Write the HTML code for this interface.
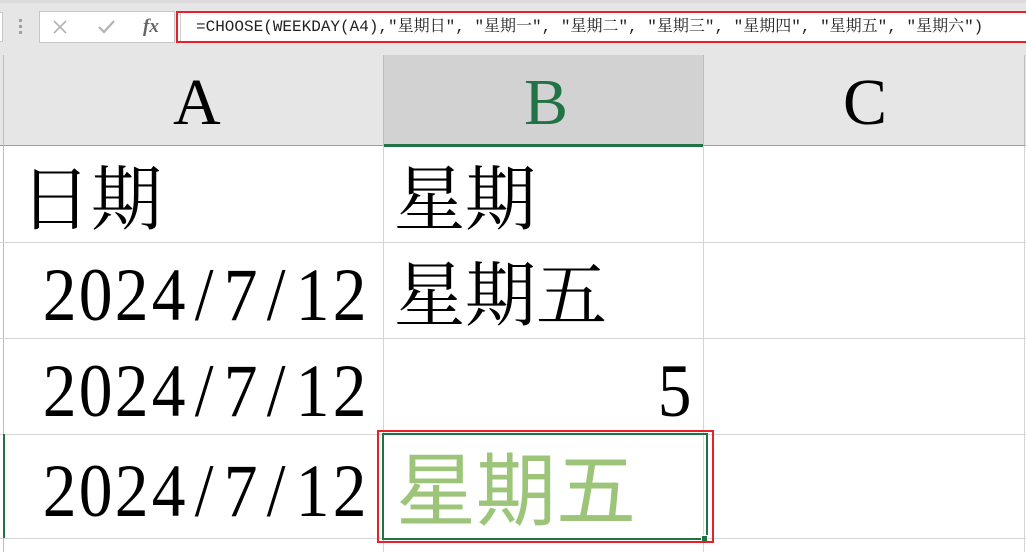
<!DOCTYPE html>
<html><head><meta charset="utf-8"><style>
*{margin:0;padding:0;box-sizing:border-box}
body{width:1026px;height:552px;overflow:hidden;background:#fff;position:relative;font-family:"Liberation Serif","Noto Serif CJK SC",serif}
.a{position:absolute}
.cj{font-family:"Liberation Serif","Noto Serif CJK SC",serif;font-size:71px;line-height:1;color:#000;white-space:nowrap}
.num{font-family:"Liberation Serif",serif;font-size:75px;line-height:1;white-space:nowrap}
.num span{display:inline-block;width:36.2px;text-align:center;transform:scaleX(0.9)}
.vl{position:absolute;width:1px;background:#d4d4d4}
.hl{position:absolute;height:1px;background:#d4d4d4}
</style></head><body>
<!-- toolbar -->
<div class="a" style="left:0;top:0;width:1026px;height:55px;background:#e6e6e6"></div>
<div class="a" style="left:0;top:0;width:1026px;height:3px;background:#dcdcdc"></div>
<div class="a" style="left:0;top:12px;width:3px;height:30px;border:1px solid #c6c6c6;border-left:none;background:#fff"></div>
<div class="a" style="left:19px;top:19px;width:3px;height:3px;background:#a0a0a0;box-shadow:0 6px 0 #a0a0a0,0 12px 0 #a0a0a0"></div>
<div class="a" style="left:39px;top:11px;width:136px;height:32px;background:#fff;border:1px solid #c6c6c6"></div>
<svg class="a" style="left:50px;top:17px" width="20" height="20"><path d="M4 4L16 16M16 4L4 16" stroke="#b4b4b4" stroke-width="1.6"/></svg>
<svg class="a" style="left:96px;top:17px" width="22" height="20"><path d="M3 10L8 15L18 4" stroke="#b4b4b4" stroke-width="2.2" fill="none"/></svg>
<div class="a" style="left:143px;top:16px;font-size:19px;font-style:italic;font-weight:bold;color:#666;font-family:'Liberation Serif',serif">fx</div>
<div class="a" style="left:176px;top:11px;width:850px;height:32px;background:#fff;border:2px solid #e8202a;border-right:none"></div>
<div class="a" style="left:180px;top:13px;width:1px;height:28px;background:#ccc"></div>
<div class="a" style="left:196px;top:17px;font-size:16px;line-height:20px;color:#222;white-space:nowrap;font-family:'Liberation Mono','Noto Serif CJK SC',monospace">=CHOOSE(WEEKDAY(A4),″星期日″, ″星期一″, ″星期二″, ″星期三″, ″星期四″, ″星期五″, ″星期六″)</div>
<!-- header row -->
<div class="a" style="left:0;top:55px;width:1026px;height:91px;background:#e6e6e6"></div>
<div class="a" style="left:383px;top:55px;width:320px;height:91px;background:#d2d2d2"></div>
<div class="a" style="left:0;top:145px;width:1026px;height:1px;background:#9e9e9e"></div>
<div class="a" style="left:383px;top:144px;width:320px;height:3px;background:#217346"></div>
<div class="a" style="left:3px;top:55px;width:1px;height:497px;background:#bdbdbd"></div>
<div class="a" style="left:383px;top:55px;width:1px;height:91px;background:#bdbdbd"></div>
<div class="a" style="left:703px;top:55px;width:1px;height:91px;background:#bdbdbd"></div>
<div class="a" style="left:1024px;top:55px;width:1px;height:91px;background:#bdbdbd"></div>
<div class="a" style="left:173px;top:70px;font-size:66px;line-height:1;color:#000">A</div>
<div class="a" style="left:524px;top:70px;font-size:66px;line-height:1;color:#217346">B</div>
<div class="a" style="left:843px;top:70px;font-size:66px;line-height:1;color:#000">C</div>
<!-- grid -->
<div class="vl" style="left:383px;top:146px;height:406px"></div>
<div class="vl" style="left:703px;top:146px;height:406px"></div>
<div class="vl" style="left:1024px;top:146px;height:406px"></div>
<div class="hl" style="left:0;top:242px;width:1026px"></div>
<div class="hl" style="left:0;top:338px;width:1026px"></div>
<div class="hl" style="left:0;top:434px;width:1026px"></div>
<div class="hl" style="left:0;top:538px;width:1026px"></div>
<div class="a" style="left:3px;top:434px;width:2px;height:104px;background:#217346"></div>
<!-- cells -->
<div class="a cj" style="left:20px;top:166px">日期</div>
<div class="a cj" style="left:394px;top:166px">星期</div>
<div class="a cj" style="left:394px;top:262px">星期五</div>
<div class="a num" style="left:41px;top:258px"><span>2</span><span>0</span><span>2</span><span>4</span><span>/</span><span>7</span><span>/</span><span>1</span><span>2</span></div>
<div class="a num" style="left:41px;top:354px"><span>2</span><span>0</span><span>2</span><span>4</span><span>/</span><span>7</span><span>/</span><span>1</span><span>2</span></div>
<div class="a num" style="left:41px;top:454px"><span>2</span><span>0</span><span>2</span><span>4</span><span>/</span><span>7</span><span>/</span><span>1</span><span>2</span></div>
<div class="a num" style="left:656px;top:354px"><span>5</span></div>
<!-- selection -->
<div class="a" style="left:382px;top:433px;width:326px;height:107px;border:2px solid #217346"></div>
<div class="a" style="left:701px;top:535px;width:7px;height:7px;background:#217346;border:1px solid #fff"></div>
<div class="a" style="left:377px;top:430px;width:337px;height:113px;border:2px solid #e8202a"></div>
<div class="a" style="left:396px;top:452px;font-family:'Liberation Sans','Noto Sans CJK SC',sans-serif;font-size:80px;line-height:1;color:#9cc57a;white-space:nowrap">星期五</div>
</body></html>
